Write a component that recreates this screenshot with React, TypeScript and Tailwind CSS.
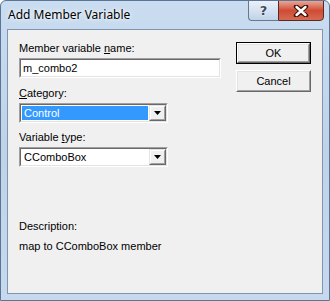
import React from "react"

const dlgFont = "font-['Liberation_Sans',Arial,sans-serif] text-[11px] leading-[13px] text-black"

function Sunken(props: { className?: string; children: React.ReactNode }) {
    return (
        <div className={`border border-t-[#a0a0a0] border-l-[#a0a0a0] border-r-white border-b-white ${props.className ?? ""}`}>
            <div className="h-full border border-t-[#696969] border-l-[#696969] border-r-[#e3e3e3] border-b-[#e3e3e3] bg-white flex">
                {props.children}
            </div>
        </div>
    )
}

function DropButton() {
    return (
        <div className="w-[17px] h-full border border-t-[#e3e3e3] border-l-[#e3e3e3] border-r-[#696969] border-b-[#696969]">
            <div className="h-full border border-t-white border-l-white border-r-[#a0a0a0] border-b-[#a0a0a0] bg-[#f0f0f0] flex items-center justify-center">
                <svg width="7" height="4" viewBox="0 0 7 4">
                    <path d="M0 0H7L3.5 4Z" fill="#000" />
                </svg>
            </div>
        </div>
    )
}

function ComboBox(props: { value: string; selected?: boolean }) {
    return (
        <Sunken className="w-[149px] h-[20px]">
            <div className="flex-1 p-px">
                <div className={`h-full flex items-center pl-[2px] ${props.selected ? "bg-[#3399ff] text-white" : "text-black"}`}>
                    {props.value}
                </div>
            </div>
            <DropButton />
        </Sunken>
    )
}

function DlgButton(props: { label: string; isDefault?: boolean }) {
    if (props.isDefault) {
        return (
            <div className="w-[75px] h-[22px] border border-black">
                <div className="h-full border border-t-white border-l-white border-r-[#696969] border-b-[#696969]">
                    <div className="h-full border border-t-[#e3e3e3] border-l-[#e3e3e3] border-r-[#a0a0a0] border-b-[#a0a0a0] bg-[#f0f0f0] flex items-center justify-center">
                        {props.label}
                    </div>
                </div>
            </div>
        )
    }
    return (
        <div className="w-[75px] h-[22px] border border-t-white border-l-white border-r-[#696969] border-b-[#696969]">
            <div className="h-full border border-t-[#e3e3e3] border-l-[#e3e3e3] border-r-[#a0a0a0] border-b-[#a0a0a0] bg-[#f0f0f0] flex items-center justify-center">
                {props.label}
            </div>
        </div>
    )
}

export default function App() {
    return (
        <div className="w-[330px] h-[301px] border border-[#5b7594] rounded-t-[6px] bg-gradient-to-b from-[#c9dcf0] via-[#bed3ea] to-[#c6d9ee] flex flex-col px-[6px] pb-[6px] overflow-hidden">
            {/* title bar */}
            <div className="h-[28px] flex justify-between">
                <div className="pl-px pt-[6px] font-['Noto_Sans',sans-serif] text-[12px] leading-[16px] text-black [text-shadow:0_0_6px_rgba(255,255,255,0.95),0_0_3px_rgba(255,255,255,0.9)]">
                    Add Member Variable
                </div>
                <div className="flex -mt-px -mr-px h-[21px]">
                    <div className="w-[30px] h-full border border-[#66798f] border-r-0 rounded-bl-[4px] bg-gradient-to-b from-[#eaf1f9] via-[#d5e2f1] to-[#c1d3e9] flex items-center justify-center">
                        <span className="font-['DejaVu_Sans',sans-serif] font-bold text-[13px] leading-none text-[#3a4a5c] [text-shadow:0_0_1px_#fff,0_0_2px_#fff]">?</span>
                    </div>
                    <div className="w-[46px] h-full border border-[#5a2a22] rounded-br-[4px] bg-gradient-to-b from-[#e8a597] via-[#cf4b34] to-[#d66a52] flex items-center justify-center">
                        <svg width="16" height="12" viewBox="0 0 16 12">
                            <path d="M3 1.5L8 5L13 1.5M3 10.5L8 7L13 10.5M3 1.5L13 10.5M13 1.5L3 10.5" stroke="#3b1610" strokeWidth="4.4" strokeLinecap="round" fill="none" />
                            <path d="M3.5 2L12.5 10M12.5 2L3.5 10" stroke="#fff" strokeWidth="2.4" strokeLinecap="round" fill="none" />
                        </svg>
                    </div>
                </div>
            </div>

            {/* client area */}
            <div className={`flex-1 border border-[#8196ad] bg-[#f0f0f0] pl-[11px] pt-[12px] flex ${dlgFont}`}>
                <div className="w-[202px] flex flex-col">
                    <div>Member variable <u>n</u>ame:</div>
                    <Sunken className="mt-[3px] h-[20px]">
                        <div className="flex items-center pl-[2px]">m_combo2</div>
                    </Sunken>

                    <div className="mt-[9px]"><u>C</u>ategory:</div>
                    <div className="mt-[3px]">
                        <ComboBox value="Control" selected />
                    </div>

                    <div className="mt-[8px]">Variable <u>t</u>ype:</div>
                    <div className="mt-[3px]">
                        <ComboBox value="CComboBox" />
                    </div>

                    <div className="mt-[53px]">Description:</div>
                    <div className="mt-[7px]">map to CComboBox member</div>
                </div>

                <div className="ml-[15px] flex flex-col gap-[6px]">
                    <DlgButton label="OK" isDefault />
                    <DlgButton label="Cancel" />
                </div>
            </div>
        </div>
    )
}
